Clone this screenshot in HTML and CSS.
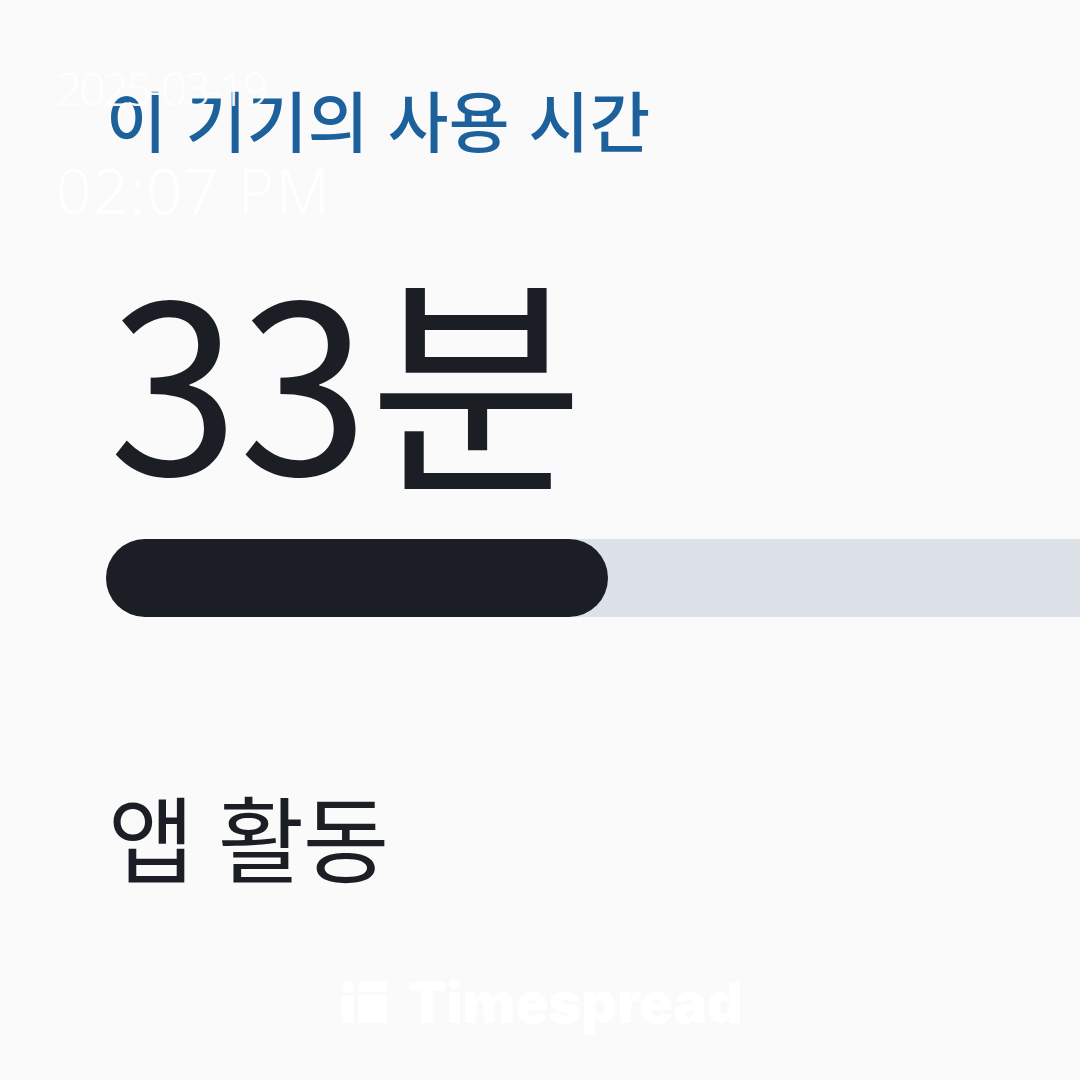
FILE: index.html
```html
<!DOCTYPE html>
<html lang="ko">
<head>
  <meta charset="UTF-8" />
  <meta name="viewport" content="width=device-width, initial-scale=1.0" />
  <title>디지털 웰빙</title>
  <link rel="stylesheet" href="styles.css">
</head>
<body>
  <main class="screen">
    <h1 class="title">이 기기의 사용 시간</h1>
    <div class="total">33분</div>
    <div class="usage-bar">
      <div class="usage-fill" style="width: 502px"></div>
    </div>
    <h2 class="section">앱 활동</h2>
  </main>

  <!-- capture stamp -->
  <div class="stamp">
    <span class="stamp-date">2025-03-19</span>
    <span class="stamp-time">02:07 PM</span>
  </div>

  <div class="brand">
    <svg class="brand-icon" width="46" height="46" viewBox="0 0 46 46">
      <circle cx="6" cy="7" r="6" fill="#fff" />
      <rect x="0" y="15" width="12" height="28" fill="#fff" />
      <rect x="16" y="2" width="29" height="10" fill="#fff" />
      <rect x="16" y="15" width="29" height="28" fill="#fff" />
    </svg>
    <span class="brand-name">Timespread</span>
  </div>
</body>
</html>
```

FILE: styles.css
```css
:root {
  --bg: #fafafa;
  --text: #1b1e24;
  --blue: #1d619c;
  --track: #dde1e8;
}

html, body {
  margin: 0;
  height: 100%;
  overflow: hidden;
}

body {
  background: var(--bg);
  color: var(--text);
  font-family: "Noto Sans CJK KR", "Noto Sans", sans-serif;
  position: relative;
}

.screen {
  padding: 70px 0 0 106px;
}

.title {
  margin: 0;
  color: var(--blue);
  font-size: 66px;
  font-weight: 500;
  line-height: 96px;
  letter-spacing: 0.3px;
}

.total {
  margin-top: 77px;
  margin-left: 3px;
  font-size: 234px;
  font-weight: 400;
  line-height: 260px;
  letter-spacing: 0;
}

.usage-bar {
  margin-top: 36px;
  height: 78px;
  background: var(--track);
  border-radius: 39px 0 0 39px;
}

.usage-fill {
  height: 100%;
  background: var(--text);
  border-radius: 39px;
}

.section {
  margin: 158px 0 0 2px;
  font-size: 94px;
  font-weight: 400;
  line-height: 120px;
  letter-spacing: -1.5px;
}

.stamp {
  position: absolute;
  left: 56px;
  top: 60px;
  display: flex;
  flex-direction: column;
  color: rgba(255, 255, 255, 0.95);
  font-family: "Noto Sans", sans-serif;
  font-weight: 300;
}

.stamp-date {
  font-size: 46px;
  line-height: 56px;
  letter-spacing: -3px;
}

.stamp-time {
  margin-top: 38px;
  font-size: 62px;
  line-height: 72px;
  letter-spacing: 1.5px;
}

.brand {
  position: absolute;
  left: 342px;
  top: 978px;
  display: flex;
  align-items: center;
  gap: 20px;
}

.brand-name {
  color: #fff;
  font-family: Inter, "Liberation Sans", sans-serif;
  font-weight: 900;
  font-size: 56px;
  letter-spacing: -0.3px;
  line-height: 50px;
}
```
